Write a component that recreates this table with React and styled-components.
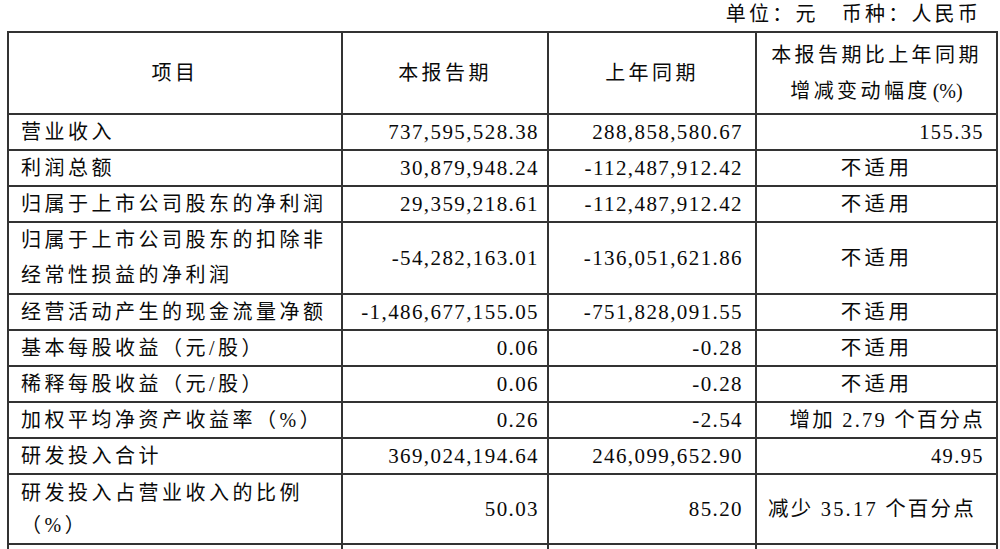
import React from 'react'
import styled, { createGlobalStyle } from 'styled-components'

const GlobalStyle = createGlobalStyle`
    html, body {
        margin: 0;
        padding: 0;
        background: #fff;
    }
    body {
        font-family: 'Liberation Serif', 'Noto Sans CJK SC', serif;
        color: #0a0a0a;
        overflow: hidden;
    }
`

const Page = styled.div`
    width: 1000px;
    height: 549px;
    overflow: hidden;
    padding-left: 7px;
    box-sizing: border-box;
`

const Unit = styled.div`
    width: 988px;
    height: 31px;
    box-sizing: border-box;
    padding-right: 14px;
    text-align: right;
    font-size: 20px;
    line-height: 28px;
    letter-spacing: 3.2px;
`

const Table = styled.table`
    width: 989px;
    border-collapse: collapse;
    table-layout: fixed;
    font-size: 20px;
`

const Row = styled.tr`
    height: ${({ $h }) => $h || 36}px;
`

const Cell = styled.td`
    border: 2px solid #333;
    padding: 0 12px 0 12px;
    vertical-align: middle;
    white-space: nowrap;
    overflow: hidden;
    line-height: 34px;
`

const HeadCell = styled(Cell)`
    text-align: center;
    letter-spacing: 3.4px;
    line-height: ${({ $lh }) => $lh || 34}px;
`

const Pct = styled.span`
    letter-spacing: 0;
    margin-left: 2px;
`

const LabelCell = styled(Cell)`
    text-align: left;
    letter-spacing: 3.5px;
    line-height: ${({ $lh }) => $lh || 34}px;
    white-space: normal;
`

const NumCell = styled(Cell)`
    text-align: right;
    font-size: 21px;
    letter-spacing: 1.4px;
    padding-right: ${({ $pr }) => $pr || 8}px;
`

const NoteCell = styled(Cell)`
    text-align: ${({ $align }) => $align || 'center'};
    font-size: 20.5px;
    letter-spacing: ${({ $ls }) => $ls || 3.4}px;
    padding-left: 11px;
    padding-right: ${({ $pr }) => $pr || 11}px;
`

const rows = [
    { label: '营业收入', cur: '737,595,528.38', prev: '288,858,580.67', note: '155.35', align: 'right', ls: 1.4, pr: 12 },
    { label: '利润总额', cur: '30,879,948.24', prev: '-112,487,912.42', note: '不适用' },
    { label: '归属于上市公司股东的净利润', cur: '29,359,218.61', prev: '-112,487,912.42', note: '不适用' },
    { label: ['归属于上市公司股东的扣除非', '经常性损益的净利润'], cur: '-54,282,163.01', prev: '-136,051,621.86', note: '不适用', h: 72, lh: 35 },
    { label: '经营活动产生的现金流量净额', cur: '-1,486,677,155.05', prev: '-751,828,091.55', note: '不适用' },
    { label: '基本每股收益（元/股）', cur: '0.06', prev: '-0.28', note: '不适用' },
    { label: '稀释每股收益（元/股）', cur: '0.06', prev: '-0.28', note: '不适用' },
    { label: '加权平均净资产收益率（%）', cur: '0.26', prev: '-2.54', note: '增加 2.79 个百分点', align: 'right', ls: 2.2 },
    { label: '研发投入合计', cur: '369,024,194.64', prev: '246,099,652.90', note: '49.95', align: 'right', ls: 1.4, pr: 12 },
    { label: ['研发投入占营业收入的比例', '（%）'], cur: '50.03', prev: '85.20', note: '减少 35.17 个百分点', align: 'left', ls: 2.2, h: 70, lh: 32 },
    { label: '', cur: '', prev: '', note: '' },
]

const App = () => {
    return (
        <Page>
            <GlobalStyle />
            <Unit>单位：元　币种：人民币</Unit>
            <Table>
                <colgroup>
                    <col style={{ width: 334 }} />
                    <col style={{ width: 206 }} />
                    <col style={{ width: 208 }} />
                    <col style={{ width: 241 }} />
                </colgroup>
                <tbody>
                    <Row $h={82}>
                        <HeadCell>项目</HeadCell>
                        <HeadCell>本报告期</HeadCell>
                        <HeadCell>上年同期</HeadCell>
                        <HeadCell $lh={36}>
                            本报告期比上年同期
                            <br />
                            增减变动幅度<Pct>(%)</Pct>
                        </HeadCell>
                    </Row>
                    {rows.map((r, i) => (
                        <Row key={i} $h={r.h}>
                            <LabelCell $lh={r.lh}>
                                {Array.isArray(r.label)
                                    ? r.label.map((l, j) => <div key={j}>{l}</div>)
                                    : r.label}
                            </LabelCell>
                            <NumCell>{r.cur}</NumCell>
                            <NumCell $pr={12}>{r.prev}</NumCell>
                            <NoteCell $align={r.align} $ls={r.ls} $pr={r.pr}>
                                {r.note}
                            </NoteCell>
                        </Row>
                    ))}
                </tbody>
            </Table>
        </Page>
    )
}

export default App
